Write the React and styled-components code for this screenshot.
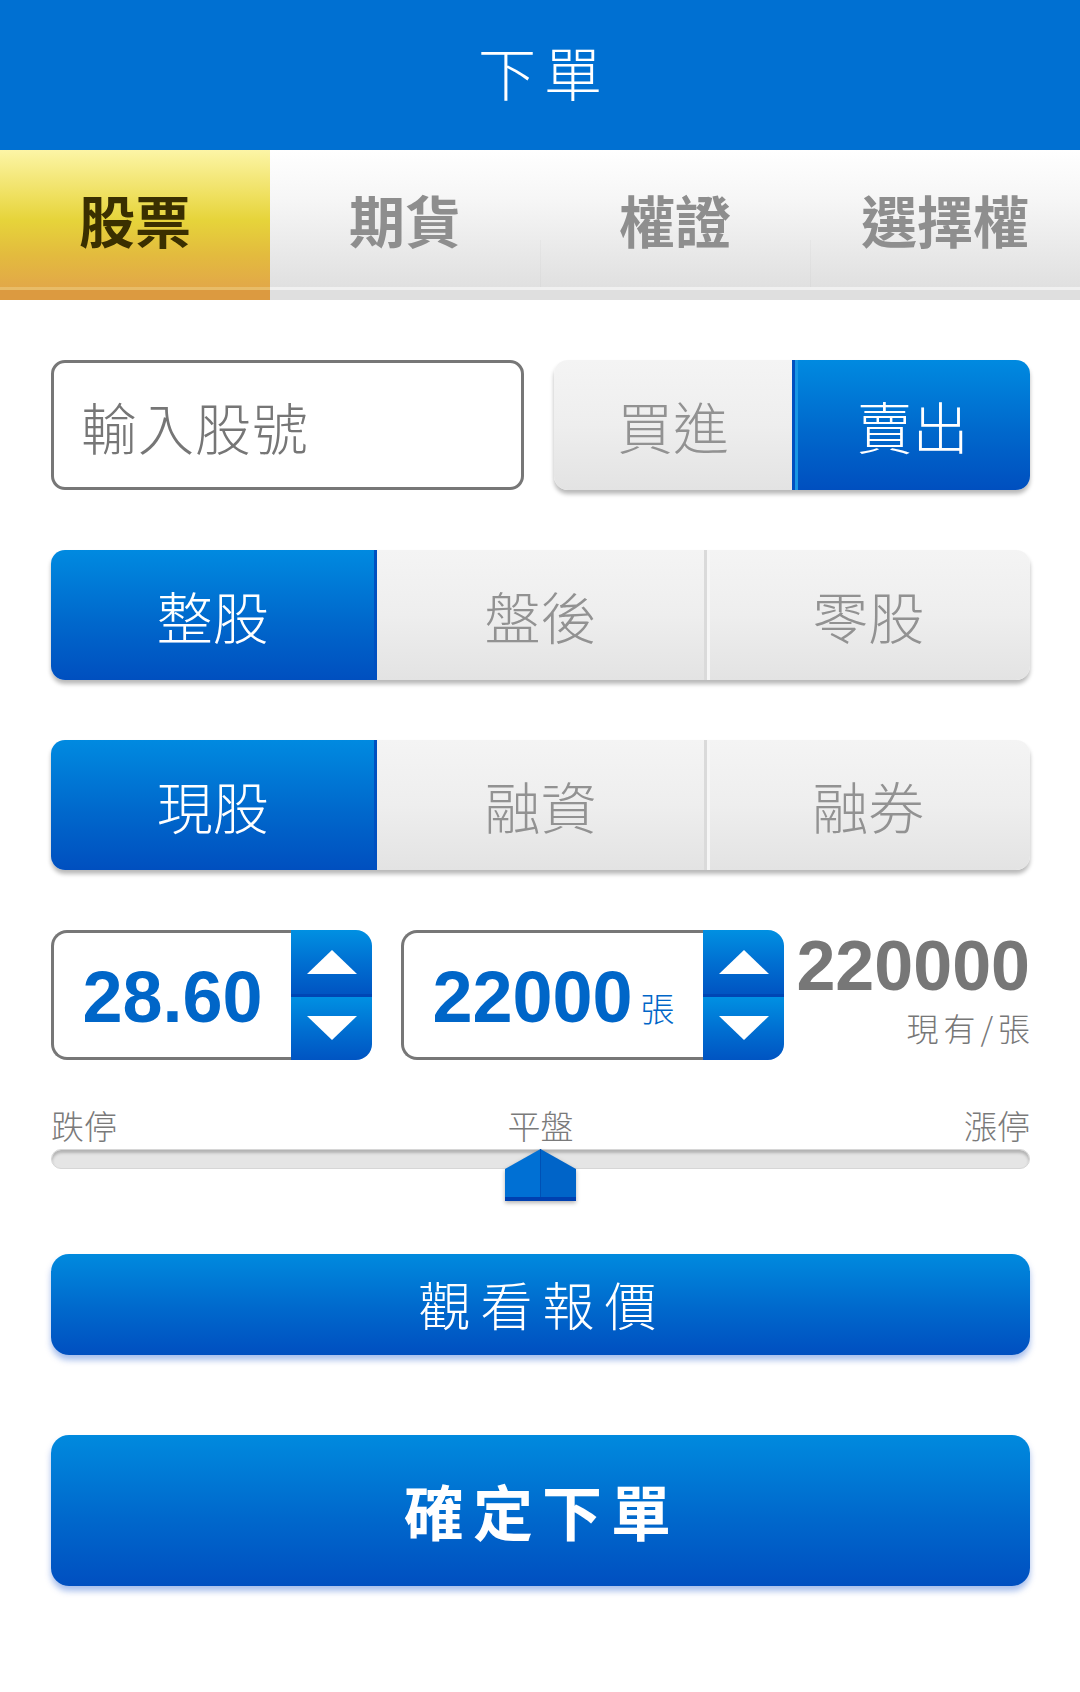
import { createGlobalStyle, styled } from "styled-components";

const GlobalStyle = createGlobalStyle`
  body {
    margin: 0;
    background: #ffffff;
    font-family: "Noto Sans CJK TC", "Noto Sans", sans-serif;
  }
`;

const CJK = `"Noto Sans CJK TC", "Noto Sans", sans-serif`;
const NUM = `"Liberation Sans", Arial, sans-serif`;

const TABS = ["股票", "期貨", "權證", "選擇權"];

// arrows of the spinner
const Arrow = ({ down }) => (
  <svg width="50" height="24" viewBox="0 0 50 24">
    <polygon
      points={down ? "0,0 50,0 25,24" : "25,0 50,24 0,24"}
      fill="#ffffff"
    />
  </svg>
);

const Thumb = () => (
  <ThumbSvg width="71" height="52" viewBox="0 0 71 52">
    <polygon points="0,20 35.5,0 35.5,48 0,48" fill="#0070d4" />
    <polygon points="35.5,0 71,20 71,48 35.5,48" fill="#0064c8" />
    <line x1="35.5" y1="0" x2="35.5" y2="48" stroke="#0050b4" strokeWidth="1" />
    <rect x="0" y="48" width="71" height="4" fill="#0040b0" />
  </ThumbSvg>
);

const Segmented = ({ items, active }) => (
  <SegmentGroup $count={items.length}>
    {items.map((label, i) => (
      <Segment
        key={label}
        $active={i === active}
        $edge={i === active ? (i === 0 ? "right" : "left") : null}
        $divider={i > 0 && i !== active && i - 1 !== active}
      >
        {label}
      </Segment>
    ))}
  </SegmentGroup>
);

const App = () => {
  return (
    <Page>
      <GlobalStyle />
      <Header>
        <Title>下單</Title>
      </Header>

      <TabBar>
        {TABS.map((t, i) => (
          <Tab key={t} $active={i === 0} $sep={i >= 2}>
            {t}
          </Tab>
        ))}
      </TabBar>

      <Content>
        <TopRow>
          <CodeInput>輸入股號</CodeInput>
          <Segmented items={["買進", "賣出"]} active={1} />
        </TopRow>

        <Segmented items={["整股", "盤後", "零股"]} active={0} />
        <Segmented items={["現股", "融資", "融券"]} active={0} />

        <PriceRow>
          <Stepper $width="321px">
            <Field>
              <Value>28.60</Value>
            </Field>
            <Spinner>
              <SpinHalf $top>
                <Arrow />
              </SpinHalf>
              <SpinHalf>
                <Arrow down />
              </SpinHalf>
            </Spinner>
          </Stepper>

          <Stepper $width="383px">
            <Field>
              <Value>22000</Value>
              <Unit>張</Unit>
            </Field>
            <Spinner>
              <SpinHalf $top>
                <Arrow />
              </SpinHalf>
              <SpinHalf>
                <Arrow down />
              </SpinHalf>
            </Spinner>
          </Stepper>

          <Holding>
            <HoldingValue>220000</HoldingValue>
            <HoldingLabel>現有/張</HoldingLabel>
          </Holding>
        </PriceRow>

        <SliderBlock>
          <SliderLabels>
            <span>跌停</span>
            <span>平盤</span>
            <span>漲停</span>
          </SliderLabels>
          <Track>
            <Thumb />
          </Track>
        </SliderBlock>

        <QuoteButton>觀看報價</QuoteButton>
        <SubmitButton>確定下單</SubmitButton>
      </Content>
    </Page>
  );
};

export default App;

const Page = styled.div`
  width: 1080px;
  min-height: 1692px;
  background: #ffffff;
`;

const Header = styled.header`
  height: 150px;
  background: #0070d2;
  display: flex;
  align-items: center;
  justify-content: center;
`;

const Title = styled.h1`
  margin: 0 0 8px;
  padding-left: 8px;
  font-family: ${CJK};
  font-size: 58px;
  font-weight: 300;
  letter-spacing: 8px;
  color: #ffffff;
  line-height: 1;
`;

const TabBar = styled.nav`
  display: grid;
  grid-template-columns: repeat(4, 1fr);
  height: 150px;
`;

const Tab = styled.div`
  position: relative;
  display: flex;
  align-items: center;
  justify-content: center;
  padding-bottom: 13px;
  font-family: ${CJK};
  font-size: 56px;
  font-weight: 700;
  line-height: 1;
  color: ${({ $active }) => ($active ? "#3a2f00" : "#8e8e8e")};
  background: ${({ $active }) =>
    $active
      ? `linear-gradient(to bottom, #fcf5a6 0px, #efe060 45px, #e6d43a 70px, #e3bb3e 105px, #e2a848 137px,
         #e8bc68 137px, #e8bc68 140px, #dc9a40 140px, #dc9a40 150px)`
      : `linear-gradient(to bottom, #ffffff 0px, #f6f6f6 50px, #e8e8e8 105px, #e0e0e0 137px,
         #f0f0f0 137px, #f0f0f0 140px, #dfdfdf 140px, #dfdfdf 150px)`};

  &::before {
    content: "";
    display: ${({ $sep }) => ($sep ? "block" : "none")};
    position: absolute;
    left: 0;
    top: 90px;
    height: 47px;
    width: 1px;
    background: rgba(0, 0, 0, 0.025);
  }
`;

const Content = styled.main`
  padding: 60px 50px 0 51px;
  display: flex;
  flex-direction: column;
  gap: 60px;
`;

const TopRow = styled.div`
  display: grid;
  grid-template-columns: 473px 1fr;
  column-gap: 30px;
`;

const CodeInput = styled.div`
  box-sizing: border-box;
  height: 130px;
  border: 3px solid #777777;
  border-radius: 14px;
  display: flex;
  align-items: center;
  padding-left: 27px;
  font-family: ${CJK};
  font-size: 56px;
  font-weight: 300;
  letter-spacing: 1px;
  color: #767676;
`;

const SegmentGroup = styled.div`
  display: grid;
  grid-template-columns: repeat(${({ $count }) => $count}, 1fr);
  height: 130px;
  border-radius: 14px;
  overflow: hidden;
  box-shadow: 0 4px 4px rgba(0, 0, 0, 0.28);
`;

const Segment = styled.div`
  box-sizing: border-box;
  display: flex;
  align-items: center;
  justify-content: center;
  font-family: ${CJK};
  font-size: 56px;
  font-weight: 300;
  line-height: 1;
  color: ${({ $active }) => ($active ? "#ffffff" : "#929292")};
  background: ${({ $active }) =>
    $active
      ? "linear-gradient(to bottom, #008ae0, #0068cc 55%, #004fbf)"
      : "linear-gradient(to bottom, #f4f4f4, #eeeeee 50%, #e3e3e3)"};
  border-left: ${({ $edge, $divider }) =>
    $edge === "left"
      ? "3px solid #0050c0"
      : $divider
      ? "3px solid #dadada"
      : "none"};
  border-right: ${({ $edge }) => ($edge === "right" ? "3px solid #0050c0" : "none")};
  box-shadow: ${({ $edge, $divider }) =>
    $edge === "left"
      ? "inset 3px 0 0 #1896e4"
      : $divider
      ? "inset 3px 0 0 #f6f6f6"
      : "none"};
`;

const PriceRow = styled.div`
  display: flex;
  height: 130px;
`;

const Stepper = styled.div`
  display: flex;
  flex: 0 0 ${({ $width }) => $width};
  height: 130px;

  & + & {
    margin-left: 29px;
  }
`;

const Field = styled.div`
  flex: 1;
  box-sizing: border-box;
  border: 3px solid #777777;
  border-right: none;
  border-radius: 16px 0 0 16px;
  display: flex;
  align-items: baseline;
  justify-content: center;
  padding-top: 28px;
`;

const Value = styled.span`
  font-family: ${NUM};
  font-size: 72px;
  font-weight: 700;
  line-height: 1;
  color: #0066c8;
`;

const Unit = styled.span`
  margin-left: 8px;
  font-family: ${CJK};
  font-size: 34px;
  font-weight: 300;
  color: #0066c8;
`;

const Spinner = styled.div`
  width: 81px;
  display: flex;
  flex-direction: column;
  border-radius: 0 16px 16px 0;
  overflow: hidden;
`;

const SpinHalf = styled.div`
  flex: 1;
  display: flex;
  align-items: center;
  justify-content: center;
  background: linear-gradient(to bottom, #0090e2, #0070d2 50%, #0054c2);
  border-bottom: ${({ $top }) => ($top ? "3px solid #0046b4" : "none")};
`;

const Holding = styled.div`
  margin-left: auto;
  display: flex;
  flex-direction: column;
  align-items: flex-end;
  padding-top: 1px;
`;

const HoldingValue = styled.div`
  font-family: ${NUM};
  font-size: 70px;
  font-weight: 700;
  line-height: 1;
  color: #777777;
`;

const HoldingLabel = styled.div`
  margin-top: 7px;
  margin-right: -5px;
  font-family: ${CJK};
  font-size: 32px;
  font-weight: 300;
  letter-spacing: 5px;
  line-height: 1.2;
  color: #777777;
`;

const SliderBlock = styled.div`
  margin-top: -14px;
  display: flex;
  flex-direction: column;
`;

const SliderLabels = styled.div`
  display: flex;
  justify-content: space-between;
  font-family: ${CJK};
  font-size: 33px;
  font-weight: 300;
  line-height: 1.2;
  color: #7a7a7a;
`;

const Track = styled.div`
  position: relative;
  margin-top: 3px;
  height: 20px;
  box-sizing: border-box;
  border-radius: 10px;
  border: 1px solid #d6d6d6;
  background: #e5e5e5;
  box-shadow: inset 0 3px 3px rgba(0, 0, 0, 0.22);
  margin-bottom: 25px;
`;

const ThumbSvg = styled.svg`
  position: absolute;
  left: calc(50% - 36px);
  top: -1px;
  filter: drop-shadow(0 2px 2px rgba(0, 0, 0, 0.3));
`;

const BlueButton = styled.button`
  width: 100%;
  border: none;
  border-radius: 18px;
  color: #ffffff;
  font-family: ${CJK};
  background: linear-gradient(to bottom, #008ade, #0068cc 55%, #004fc0);
  box-shadow: 0 5px 6px rgba(0, 70, 200, 0.35);
  display: flex;
  align-items: center;
  justify-content: center;
  line-height: 1;
`;

const QuoteButton = styled(BlueButton)`
  height: 101px;
  font-size: 52px;
  font-weight: 300;
  letter-spacing: 10px;
  padding-left: 10px;
`;

const SubmitButton = styled(BlueButton)`
  margin-top: 20px;
  height: 151px;
  font-size: 60px;
  font-weight: 700;
  letter-spacing: 9px;
  padding-left: 9px;
`;
